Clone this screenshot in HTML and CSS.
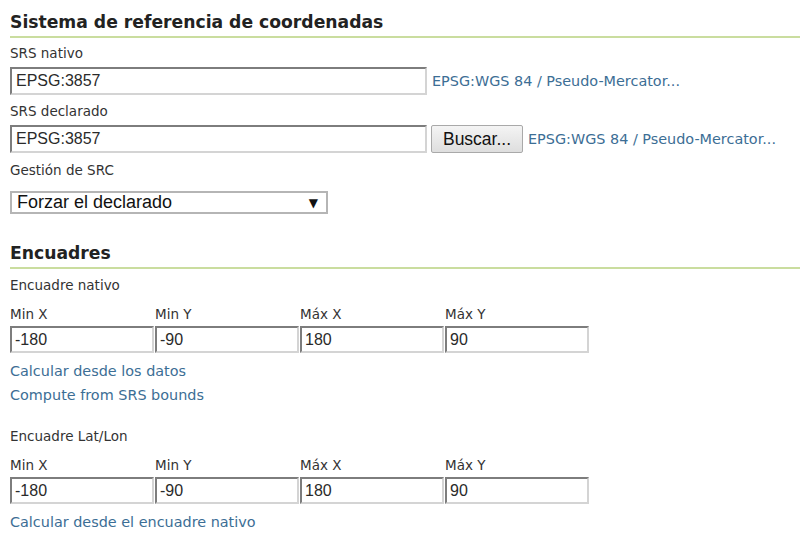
FILE: index.html
```html
<!DOCTYPE html>
<html>
<head>
<meta charset="utf-8">
<link rel="stylesheet" href="styles.css">
</head>
<body>
<div class="page">
  <h2 class="section-title first">Sistema de referencia de coordenadas</h2>
  <div class="label l-native">SRS nativo</div>
  <div class="row r-native">
    <input class="text wide" type="text" value="EPSG:3857">
    <a class="link" href="#">EPSG:WGS 84 / Pseudo-Mercator...</a>
  </div>
  <div class="label l-declared">SRS declarado</div>
  <div class="row r-declared">
    <input class="text wide" type="text" value="EPSG:3857">
    <button class="btn" type="button">Buscar...</button>
    <a class="link" href="#">EPSG:WGS 84 / Pseudo-Mercator...</a>
  </div>
  <div class="label l-handling">Gestión de SRC</div>
  <div class="select">
    <span>Forzar el declarado</span>
    <span class="arrow">▼</span>
  </div>

  <h2 class="section-title second">Encuadres</h2>
  <div class="label l-bbox">Encuadre nativo</div>
  <div class="bbox">
    <div class="cell"><div class="label">Min X</div><input class="text small" type="text" value="-180"></div>
    <div class="cell"><div class="label">Min Y</div><input class="text small" type="text" value="-90"></div>
    <div class="cell"><div class="label">Máx X</div><input class="text small" type="text" value="180"></div>
    <div class="cell"><div class="label">Máx Y</div><input class="text small" type="text" value="90"></div>
  </div>
  <div class="links">
    <a class="link" href="#">Calcular desde los datos</a>
    <a class="link" href="#">Compute from SRS bounds</a>
  </div>
  <div class="label l-latlon">Encuadre Lat/Lon</div>
  <div class="bbox">
    <div class="cell"><div class="label">Min X</div><input class="text small" type="text" value="-180"></div>
    <div class="cell"><div class="label">Min Y</div><input class="text small" type="text" value="-90"></div>
    <div class="cell"><div class="label">Máx X</div><input class="text small" type="text" value="180"></div>
    <div class="cell"><div class="label">Máx Y</div><input class="text small" type="text" value="90"></div>
  </div>
  <div class="links">
    <a class="link" href="#">Calcular desde el encuadre nativo</a>
  </div>
</div>
</body>
</html>
```
FILE: styles.css
```css
html, body {
  margin: 0;
  padding: 0;
  background: #ffffff;
}
.page {
  padding-left: 10px;
  font-family: "DejaVu Sans", Verdana, sans-serif;
  font-size: 13.5px;
  color: #333333;
}
.section-title {
  margin: 0;
  font-family: "DejaVu Sans", Verdana, sans-serif;
  font-weight: bold;
  font-size: 17.2px;
  line-height: 20px;
  color: #222222;
  padding-bottom: 4px;
  border-bottom: 2px solid #cadd9f;
}
.section-title.first { margin-top: 12px; }
.section-title.second { margin-top: 29px; }
.label {
  line-height: 16px;
  height: 16px;
  white-space: nowrap;
}
.l-native { margin-top: 7px; }
.l-declared { margin-top: 8px; }
.l-handling { margin-top: 9px; }
.l-bbox { margin-top: 8px; }
.l-latlon { margin-top: 25px; }
.row {
  display: flex;
  align-items: center;
  margin-top: 6px;
}
.text {
  box-sizing: border-box;
  margin: 0;
  font-family: "Liberation Sans", Arial, sans-serif;
  color: #2a2a2a;
  background: #ffffff;
  border-style: solid;
  border-width: 2px;
  border-color: #7d7d7d #d4d4d4 #d4d4d4 #7d7d7d;
  outline: none;
}
.text.wide {
  width: 417px;
  height: 28px;
  font-size: 16px;
  padding: 0 4px;
}
.text.small {
  width: 144px;
  height: 27px;
  font-size: 16px;
  padding: 0 3px;
}
.link {
  color: #3c6e95;
  text-decoration: none;
  font-size: 14.4px;
  white-space: nowrap;
}
.row .link { margin-left: 5px; }
.btn {
  box-sizing: border-box;
  margin: 0 0 0 4px;
  height: 28px;
  width: 92px;
  font-family: "Liberation Sans", Arial, sans-serif;
  font-size: 17.5px;
  color: #111111;
  background: linear-gradient(#f4f4f4, #dedede);
  border: 1px solid #a9a9a9;
  border-radius: 2px;
  padding: 0;
}
.select {
  box-sizing: border-box;
  margin-top: 13px;
  width: 318px;
  height: 23px;
  border: 2px solid #b5b5b5;
  display: flex;
  align-items: center;
  justify-content: space-between;
  padding: 0 8px 0 5px;
  font-family: "Liberation Sans", Arial, sans-serif;
  font-size: 18px;
  color: #111111;
}
.select .arrow {
  font-family: "DejaVu Sans", sans-serif;
  font-size: 12px;
  color: #111111;
}
.bbox {
  display: flex;
  gap: 1px;
  margin-top: 13px;
}
.cell {
  display: flex;
  flex-direction: column;
  gap: 4px;
}
.links {
  display: flex;
  flex-direction: column;
  align-items: flex-start;
  gap: 8px;
  margin-top: 10px;
}
.links .link { line-height: 16px; }
```
